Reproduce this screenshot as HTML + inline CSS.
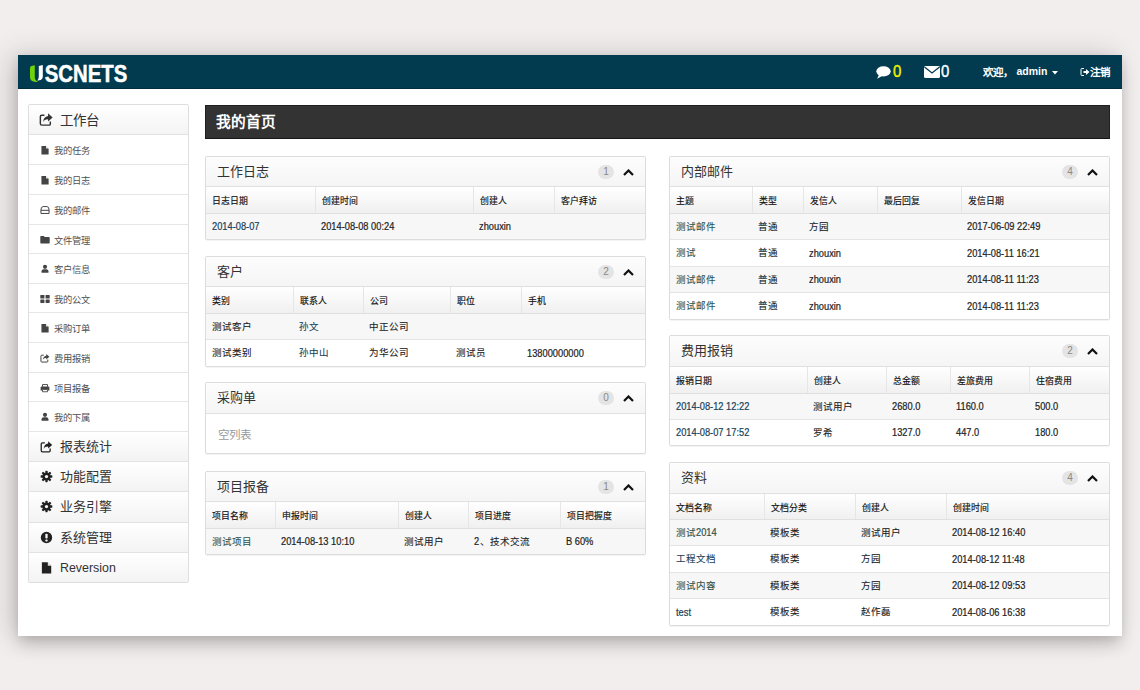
<!DOCTYPE html><html lang="zh-CN"><head><meta charset="utf-8"><style>

*{margin:0;padding:0;box-sizing:border-box}
html,body{width:1140px;height:690px;overflow:hidden}
body{background:#f2eeee;font-family:"Liberation Sans",sans-serif;color:#333;position:relative}
#frame{position:absolute;left:18px;top:55px;width:1104px;height:581px;background:#fff;box-shadow:0 10px 14px -2px rgba(60,50,50,0.22),-8px 0 26px rgba(60,50,50,0.2),0 0 9px rgba(60,50,50,0.07)}
#nav{position:absolute;left:18px;top:55px;width:1104px;height:34px;background:#023b50;border-bottom:1px solid #012d3e}
#logo{position:absolute;left:29px;top:60px;font-weight:bold;font-size:23px;color:#fff;letter-spacing:-0.3px}
#side{position:absolute;left:28px;width:161px;overflow:hidden;border:1px solid #dedede;border-radius:2px;background:#fff}
#side .sh{border-bottom:1px solid #e2e2e2;background:linear-gradient(#fff,#f4f4f4);position:absolute;left:0;right:0}
#side .sh svg{position:absolute;left:10px;top:7px}
#side .sh span{position:absolute;left:31px;top:3.5px;font-size:13.5px;color:#333}
#side .si{border-bottom:1px solid #e6e6e6;position:absolute;left:0;right:0}
#side .si i{position:absolute;left:11px;top:9.5px;line-height:0}
#side .si span{position:absolute;left:25px;top:7.5px;font-size:9.3px;color:#505050}
#side .sb{border-bottom:1px solid #e2e2e2;position:absolute;left:0;right:0;background:linear-gradient(#fff,#f3f3f3)}
#side .sb:last-child{border-bottom:none}
#side .sb i{position:absolute;left:11px;top:7.5px;line-height:0}
#side .sb span{position:absolute;left:31px;top:3.5px;font-size:13px;color:#333}
#side .sb span.en{top:8px;font-size:12.4px}
#title{position:absolute;left:205px;top:105px;width:905px;height:34px;background:#333;border:1px solid #1f1f1f;border-bottom-color:#151515}
#title span{position:absolute;left:10px;top:3.7px;font-size:14.7px;color:#fff;font-weight:bold}
.panel{position:absolute;border:1px solid #dcdcdc;border-radius:2px;background:#fff;overflow:hidden;box-shadow:0 1px 1px rgba(0,0,0,0.05)}
.ph{position:absolute;left:0;right:0;border-bottom:1px solid #e0e0e0;background:linear-gradient(#fdfdfd,#f5f5f5)}
.pt{position:absolute;left:11px;top:3.5px;font-size:13px;color:#333}
.badge{position:absolute;right:31px;top:7.5px;width:16px;height:14px;border-radius:7px;background:#e4e4e4;color:#888;font-size:10px;line-height:14px;text-align:center}
.chev{position:absolute;right:11.5px;top:11.5px;line-height:0}
.th{position:absolute;left:0;right:0;border-bottom:1px solid #e0e0e0;background:linear-gradient(#fff,#f0f0f0)}
.th .c{position:absolute;top:0;height:100%;padding-left:6px;font-size:8.9px;font-weight:500;color:#111;-webkit-text-stroke:0.15px currentColor;display:flex;align-items:center;white-space:nowrap;padding-top:1px}
.tr{position:absolute;left:0;right:0;border-bottom:1px solid #e4e4e4}
.tr:last-child{border-bottom:none}
.tr .c{position:absolute;top:0;height:100%;padding-left:6px;font-size:9.5px;color:#222;-webkit-text-stroke:0.1px currentColor;display:flex;align-items:center;white-space:nowrap;padding-bottom:2px}
.empty{position:absolute;left:0;right:0;}
.tr .en{display:inline-block;font-size:10.1px;transform:scaleX(0.92);transform-origin:0 50%;white-space:pre;-webkit-text-stroke:0.2px currentColor;position:relative;top:1.2px}
.empty{font-size:11.5px;color:#9a9a9a;padding:12px 0 0 12px}
#navr{position:absolute;top:55px;height:33px;left:0;width:1140px}

</style></head><body>
<div id="frame"></div><div id="nav"></div>
<svg width="110" height="24" viewBox="0 0 110 24" style="position:absolute;left:25px;top:60px">
<path d="M5 8.2 Q5 6.6 6.4 6.1 L9.8 5.2 L9.8 17.5 Q9.8 20.2 13.2 21.8 Q8.2 22.4 6 20.2 Q5 19 5 17 Z" fill="#6fd20a"/>
<path d="M13.8 5.9 L17.8 5 L17.8 16.4 Q17.8 19.6 14.2 20.3 Q12.8 20.5 12.3 20.2 Q13.8 19 13.8 16.5 Z" fill="#fff"/>
<text x="19.8" y="21.9" textLength="82.5" lengthAdjust="spacingAndGlyphs" font-family="Liberation Sans" font-weight="bold" font-size="23.2" fill="#fff" stroke="#fff" stroke-width="0.5">SCNETS</text>
</svg>
<svg width="15" height="13" viewBox="0 0 15 13" style="position:absolute;left:876px;top:66px"><ellipse cx="7.5" cy="5.3" rx="7.2" ry="5.1" fill="#fff"/><path d="M3 8.5 L1.2 12.8 L7 9.5 Z" fill="#fff"/></svg><span style="position:absolute;left:892.5px;top:62px;font-size:17px;color:#f0f000;transform:scaleX(0.88);-webkit-text-stroke:0.4px currentColor;transform-origin:0 0">0</span><svg width="16" height="12" viewBox="0 0 16 12" style="position:absolute;left:924px;top:66px"><rect x="0" y="0" width="16" height="12" rx="1.5" fill="#fff"/><path d="M0.5 1 L8 7 L15.5 1" fill="none" stroke="#04374f" stroke-width="1.3"/></svg><span style="position:absolute;left:941px;top:62px;font-size:17px;color:#fff;transform:scaleX(0.88);-webkit-text-stroke:0.4px currentColor;transform-origin:0 0">0</span><span style="position:absolute;left:983px;top:64px;font-size:10.5px;color:#fff;font-weight:bold;white-space:nowrap">欢迎，</span><span style="position:absolute;left:1016.5px;top:64.5px;font-size:10.5px;color:#fff;font-weight:bold">admin</span><svg width="6" height="4" viewBox="0 0 6 4" style="position:absolute;left:1051.5px;top:71px"><path d="M0 0 H6 L3 3.5 Z" fill="#fff"/></svg><svg width="10" height="10" viewBox="0 0 10 10" style="position:absolute;left:1080px;top:67px"><path d="M4 1.5 H2 Q1 1.5 1 2.5 V7.5 Q1 8.5 2 8.5 H4" fill="none" stroke="#fff" stroke-width="1"/><path d="M3.5 4 H6 V2 L9.5 5 L6 8 V6 H3.5 Z" fill="#fff"/></svg><span style="position:absolute;left:1090px;top:64px;font-size:10.5px;color:#fff;font-weight:bold">注销</span>
<div id="side" style="top:104px;height:479px">
<div class="sh" style="top:0;height:30px"><svg width="14.5" height="14.5" viewBox="0 0 16 16"><path d="M10 1.5 L15 6 L10 10.5 V8 C7 8 5.5 9 4.5 11 C4.8 7.5 6.5 4.8 10 4.3 Z" fill="#333"/><path d="M12.5 10.5 V13.2 Q12.5 14.5 11.2 14.5 H3 Q1.5 14.5 1.5 13 V5 Q1.5 3.5 3 3.5 H6" fill="none" stroke="#333" stroke-width="1.6"/></svg><span>工作台</span></div>
<div class="si" style="top:30px;height:30px"><i><svg width="10" height="10" viewBox="0 0 16 16"><path d="M2.3 1.5 H9.5 L13.8 5.8 V15.3 H2.3 Z" fill="#444"/><path d="M9.6 1.3 V5.7 H14 Z" fill="#fff" opacity="0.85"/></svg></i><span>我的任务</span></div>
<div class="si" style="top:60px;height:30px"><i><svg width="10" height="10" viewBox="0 0 16 16"><path d="M2.3 1.5 H9.5 L13.8 5.8 V15.3 H2.3 Z" fill="#444"/><path d="M9.6 1.3 V5.7 H14 Z" fill="#fff" opacity="0.85"/></svg></i><span>我的日志</span></div>
<div class="si" style="top:90px;height:30px"><i><svg width="10" height="10" viewBox="0 0 16 16"><path d="M1.5 8 Q1.5 2.5 5 2.5 H11 Q14.5 2.5 14.5 8 V13.5 H1.5 Z M1.5 8.5 H14.5" fill="none" stroke="#444" stroke-width="1.6"/></svg></i><span>我的邮件</span></div>
<div class="si" style="top:120px;height:29px"><i><svg width="10" height="10" viewBox="0 0 16 16"><path d="M0.5 2.5 Q0.5 1.5 1.5 1.5 H6 L7.5 3 H14.5 Q15.5 3 15.5 4 V12.5 Q15.5 13.5 14.5 13.5 H1.5 Q0.5 13.5 0.5 12.5 Z" fill="#444"/></svg></i><span>文件管理</span></div>
<div class="si" style="top:149px;height:30px"><i><svg width="10" height="10" viewBox="0 0 16 16"><circle cx="8" cy="4.5" r="3.3" fill="#444"/><path d="M2.5 14 V11.5 Q2.5 8.5 6 8.5 H10 Q13.5 8.5 13.5 11.5 V14 Z" fill="#444"/></svg></i><span>客户信息</span></div>
<div class="si" style="top:179px;height:29px"><i><svg width="10" height="10" viewBox="0 0 16 16"><rect x="0.5" y="1.5" width="6.6" height="5.6" rx="0.9" fill="#444"/><rect x="8.9" y="1.5" width="6.6" height="5.6" rx="0.9" fill="#444"/><rect x="0.5" y="8.6" width="6.6" height="5.6" rx="0.9" fill="#444"/><rect x="8.9" y="8.6" width="6.6" height="5.6" rx="0.9" fill="#444"/></svg></i><span>我的公文</span></div>
<div class="si" style="top:208px;height:30px"><i><svg width="10" height="10" viewBox="0 0 16 16"><path d="M2.3 1.5 H9.5 L13.8 5.8 V15.3 H2.3 Z" fill="#444"/><path d="M9.6 1.3 V5.7 H14 Z" fill="#fff" opacity="0.85"/></svg></i><span>采购订单</span></div>
<div class="si" style="top:238px;height:30px"><i><svg width="10" height="10" viewBox="0 0 16 16"><path d="M10 1.5 L15 6 L10 10.5 V8 C7 8 5.5 9 4.5 11 C4.8 7.5 6.5 4.8 10 4.3 Z" fill="#444"/><path d="M12.5 10.5 V13.2 Q12.5 14.5 11.2 14.5 H3 Q1.5 14.5 1.5 13 V5 Q1.5 3.5 3 3.5 H6" fill="none" stroke="#444" stroke-width="1.6"/></svg></i><span>费用报销</span></div>
<div class="si" style="top:268px;height:29px"><i><svg width="10" height="10" viewBox="0 0 16 16"><path d="M4 6 V2.5 H12 V6" fill="none" stroke="#444" stroke-width="1.5"/><path d="M1 7 Q1 5.5 2.5 5.5 H13.5 Q15 5.5 15 7 V12 H12.5 V10 H3.5 V12 H1 Z" fill="#444"/><path d="M4 10.5 H12 V14 H4 Z" fill="none" stroke="#444" stroke-width="1.4"/></svg></i><span>项目报备</span></div>
<div class="si" style="top:297px;height:30px"><i><svg width="10" height="10" viewBox="0 0 16 16"><circle cx="8" cy="4.5" r="3.3" fill="#444"/><path d="M2.5 14 V11.5 Q2.5 8.5 6 8.5 H10 Q13.5 8.5 13.5 11.5 V14 Z" fill="#444"/></svg></i><span>我的下属</span></div>
<div class="sb" style="top:327px;height:30px"><i><svg width="13" height="13" viewBox="0 0 16 16"><path d="M10 1.5 L15 6 L10 10.5 V8 C7 8 5.5 9 4.5 11 C4.8 7.5 6.5 4.8 10 4.3 Z" fill="#222"/><path d="M12.5 10.5 V13.2 Q12.5 14.5 11.2 14.5 H3 Q1.5 14.5 1.5 13 V5 Q1.5 3.5 3 3.5 H6" fill="none" stroke="#222" stroke-width="1.6"/></svg></i><span>报表统计</span></div>
<div class="sb" style="top:357px;height:30px"><i><svg width="13" height="13" viewBox="0 0 16 16"><g fill="#222"><circle cx="8" cy="8" r="5"/><rect x="6.6" y="0.8" width="2.8" height="14.4" rx="0.6"/><rect x="6.6" y="0.8" width="2.8" height="14.4" rx="0.6" transform="rotate(45 8 8)"/><rect x="6.6" y="0.8" width="2.8" height="14.4" rx="0.6" transform="rotate(90 8 8)"/><rect x="6.6" y="0.8" width="2.8" height="14.4" rx="0.6" transform="rotate(135 8 8)"/></g><circle cx="8" cy="8" r="2" fill="#f8f8f8"/></svg></i><span>功能配置</span></div>
<div class="sb" style="top:387px;height:31px"><i><svg width="13" height="13" viewBox="0 0 16 16"><g fill="#222"><circle cx="8" cy="8" r="5"/><rect x="6.6" y="0.8" width="2.8" height="14.4" rx="0.6"/><rect x="6.6" y="0.8" width="2.8" height="14.4" rx="0.6" transform="rotate(45 8 8)"/><rect x="6.6" y="0.8" width="2.8" height="14.4" rx="0.6" transform="rotate(90 8 8)"/><rect x="6.6" y="0.8" width="2.8" height="14.4" rx="0.6" transform="rotate(135 8 8)"/></g><circle cx="8" cy="8" r="2" fill="#f8f8f8"/></svg></i><span>业务引擎</span></div>
<div class="sb" style="top:418px;height:30px"><i><svg width="13" height="13" viewBox="0 0 16 16"><circle cx="8" cy="8" r="7" fill="#222"/><rect x="6.6" y="3.3" width="2.8" height="6" rx="1" fill="#fafafa"/><rect x="6.6" y="10.4" width="2.8" height="2.4" rx="0.6" fill="#fafafa"/></svg></i><span>系统管理</span></div>
<div class="sb" style="top:448px;height:29px"><i><svg width="13" height="13" viewBox="0 0 16 16"><path d="M2.3 1.5 H9.5 L13.8 5.8 V15.3 H2.3 Z" fill="#222"/><path d="M9.6 1.3 V5.7 H14 Z" fill="#fff" opacity="0.85"/></svg></i><span class="en">Reversion</span></div>
</div>
<div id="title"><span>我的首页</span></div>
<div class="panel" style="left:205px;top:156px;width:441px;height:84px">
<div class="ph" style="top:0;height:30px"><span class="pt">工作日志</span><span class="badge">1</span><span class="chev"><svg width="11" height="7" viewBox="0 0 11 7"><path d="M1 6 L5.5 1.5 L10 6" fill="none" stroke="#111" stroke-width="2.2"/></svg></span></div>
<div class="th" style="top:30px;height:27px">
<div class="c" style="left:0px;width:110px;">日志日期</div>
<div class="c" style="left:109px;width:158px;border-left:1px solid #e6e6e6;">创建时间</div>
<div class="c" style="left:267px;width:81px;border-left:1px solid #e6e6e6;">创建人</div>
<div class="c" style="left:348px;width:91px;border-left:1px solid #e6e6e6;">客户拜访</div>
</div>
<div class="tr" style="top:57px;height:25px;background:#f7f7f7">
<div class="c" style="left:0px;width:110px;color:#173f58"><span class="en">2014-08-07</span></div>
<div class="c" style="left:109px;width:158px"><span class="en">2014-08-08 00:24</span></div>
<div class="c" style="left:267px;width:81px"><span class="en">zhouxin</span></div>
<div class="c" style="left:348px;width:91px"></div>
</div>
</div>
<div class="panel" style="left:205px;top:256px;width:441px;height:111px">
<div class="ph" style="top:0;height:30px"><span class="pt">客户</span><span class="badge">2</span><span class="chev"><svg width="11" height="7" viewBox="0 0 11 7"><path d="M1 6 L5.5 1.5 L10 6" fill="none" stroke="#111" stroke-width="2.2"/></svg></span></div>
<div class="th" style="top:30px;height:27px">
<div class="c" style="left:0px;width:88px;">类别</div>
<div class="c" style="left:87px;width:70px;border-left:1px solid #e6e6e6;">联系人</div>
<div class="c" style="left:157px;width:87px;border-left:1px solid #e6e6e6;">公司</div>
<div class="c" style="left:244px;width:71px;border-left:1px solid #e6e6e6;">职位</div>
<div class="c" style="left:315px;width:124px;border-left:1px solid #e6e6e6;">手机</div>
</div>
<div class="tr" style="top:57px;height:26px;background:#f7f7f7">
<div class="c" style="left:0px;width:88px">测试客户</div>
<div class="c" style="left:87px;width:70px;color:#173f58">孙文</div>
<div class="c" style="left:157px;width:87px">中正公司</div>
<div class="c" style="left:244px;width:71px"></div>
<div class="c" style="left:315px;width:124px"></div>
</div>
<div class="tr" style="top:83px;height:26px;background:#ffffff">
<div class="c" style="left:0px;width:88px">测试类别</div>
<div class="c" style="left:87px;width:70px;color:#173f58">孙中山</div>
<div class="c" style="left:157px;width:87px">为华公司</div>
<div class="c" style="left:244px;width:71px">测试员</div>
<div class="c" style="left:315px;width:124px"><span class="en">13800000000</span></div>
</div>
</div>
<div class="panel" style="left:205px;top:382px;width:441px;height:72px">
<div class="ph" style="top:0;height:31px"><span class="pt">采购单</span><span class="badge">0</span><span class="chev"><svg width="11" height="7" viewBox="0 0 11 7"><path d="M1 6 L5.5 1.5 L10 6" fill="none" stroke="#111" stroke-width="2.2"/></svg></span></div>
<div class="empty" style="top:31px;height:39px">空列表</div>
</div>
<div class="panel" style="left:205px;top:471px;width:441px;height:84px">
<div class="ph" style="top:0;height:30px"><span class="pt">项目报备</span><span class="badge">1</span><span class="chev"><svg width="11" height="7" viewBox="0 0 11 7"><path d="M1 6 L5.5 1.5 L10 6" fill="none" stroke="#111" stroke-width="2.2"/></svg></span></div>
<div class="th" style="top:30px;height:27px">
<div class="c" style="left:0px;width:70px;">项目名称</div>
<div class="c" style="left:69px;width:123px;border-left:1px solid #e6e6e6;">申报时间</div>
<div class="c" style="left:192px;width:70px;border-left:1px solid #e6e6e6;">创建人</div>
<div class="c" style="left:262px;width:92px;border-left:1px solid #e6e6e6;">项目进度</div>
<div class="c" style="left:354px;width:85px;border-left:1px solid #e6e6e6;">项目把握度</div>
</div>
<div class="tr" style="top:57px;height:25px;background:#f7f7f7">
<div class="c" style="left:0px;width:70px;color:#2f524c">测试项目</div>
<div class="c" style="left:69px;width:123px"><span class="en">2014-08-13 10:10</span></div>
<div class="c" style="left:192px;width:70px">测试用户</div>
<div class="c" style="left:262px;width:92px"><span class="en">2</span>、技术交流</div>
<div class="c" style="left:354px;width:85px"><span class="en">B 60%</span></div>
</div>
</div>
<div class="panel" style="left:669px;top:156px;width:441px;height:164px">
<div class="ph" style="top:0;height:30px"><span class="pt">内部邮件</span><span class="badge">4</span><span class="chev"><svg width="11" height="7" viewBox="0 0 11 7"><path d="M1 6 L5.5 1.5 L10 6" fill="none" stroke="#111" stroke-width="2.2"/></svg></span></div>
<div class="th" style="top:30px;height:27px">
<div class="c" style="left:0px;width:83px;">主题</div>
<div class="c" style="left:82px;width:51px;border-left:1px solid #e6e6e6;">类型</div>
<div class="c" style="left:133px;width:74px;border-left:1px solid #e6e6e6;">发信人</div>
<div class="c" style="left:207px;width:84px;border-left:1px solid #e6e6e6;">最后回复</div>
<div class="c" style="left:291px;width:148px;border-left:1px solid #e6e6e6;">发信日期</div>
</div>
<div class="tr" style="top:57px;height:26px;background:#f7f7f7">
<div class="c" style="left:0px;width:83px;color:#2f524c">测试邮件</div>
<div class="c" style="left:82px;width:51px">普通</div>
<div class="c" style="left:133px;width:74px">方园</div>
<div class="c" style="left:207px;width:84px"></div>
<div class="c" style="left:291px;width:148px"><span class="en">2017-06-09 22:49</span></div>
</div>
<div class="tr" style="top:83px;height:27px;background:#ffffff">
<div class="c" style="left:0px;width:83px;color:#2f524c">测试</div>
<div class="c" style="left:82px;width:51px">普通</div>
<div class="c" style="left:133px;width:74px"><span class="en">zhouxin</span></div>
<div class="c" style="left:207px;width:84px"></div>
<div class="c" style="left:291px;width:148px"><span class="en">2014-08-11 16:21</span></div>
</div>
<div class="tr" style="top:110px;height:26px;background:#f7f7f7">
<div class="c" style="left:0px;width:83px;color:#2f524c">测试邮件</div>
<div class="c" style="left:82px;width:51px">普通</div>
<div class="c" style="left:133px;width:74px"><span class="en">zhouxin</span></div>
<div class="c" style="left:207px;width:84px"></div>
<div class="c" style="left:291px;width:148px"><span class="en">2014-08-11 11:23</span></div>
</div>
<div class="tr" style="top:136px;height:26px;background:#ffffff">
<div class="c" style="left:0px;width:83px;color:#2f524c">测试邮件</div>
<div class="c" style="left:82px;width:51px">普通</div>
<div class="c" style="left:133px;width:74px"><span class="en">zhouxin</span></div>
<div class="c" style="left:207px;width:84px"></div>
<div class="c" style="left:291px;width:148px"><span class="en">2014-08-11 11:23</span></div>
</div>
</div>
<div class="panel" style="left:669px;top:335px;width:441px;height:111px">
<div class="ph" style="top:0;height:31px"><span class="pt">费用报销</span><span class="badge">2</span><span class="chev"><svg width="11" height="7" viewBox="0 0 11 7"><path d="M1 6 L5.5 1.5 L10 6" fill="none" stroke="#111" stroke-width="2.2"/></svg></span></div>
<div class="th" style="top:31px;height:27px">
<div class="c" style="left:0px;width:138px;">报销日期</div>
<div class="c" style="left:137px;width:79px;border-left:1px solid #e6e6e6;">创建人</div>
<div class="c" style="left:216px;width:64px;border-left:1px solid #e6e6e6;">总金额</div>
<div class="c" style="left:280px;width:79px;border-left:1px solid #e6e6e6;">差旅费用</div>
<div class="c" style="left:359px;width:80px;border-left:1px solid #e6e6e6;">住宿费用</div>
</div>
<div class="tr" style="top:58px;height:26px;background:#f7f7f7">
<div class="c" style="left:0px;width:138px;color:#173f58"><span class="en">2014-08-12 12:22</span></div>
<div class="c" style="left:137px;width:79px">测试用户</div>
<div class="c" style="left:216px;width:64px"><span class="en">2680.0</span></div>
<div class="c" style="left:280px;width:79px"><span class="en">1160.0</span></div>
<div class="c" style="left:359px;width:80px"><span class="en">500.0</span></div>
</div>
<div class="tr" style="top:84px;height:25px;background:#ffffff">
<div class="c" style="left:0px;width:138px;color:#173f58"><span class="en">2014-08-07 17:52</span></div>
<div class="c" style="left:137px;width:79px">罗希</div>
<div class="c" style="left:216px;width:64px"><span class="en">1327.0</span></div>
<div class="c" style="left:280px;width:79px"><span class="en">447.0</span></div>
<div class="c" style="left:359px;width:80px"><span class="en">180.0</span></div>
</div>
</div>
<div class="panel" style="left:669px;top:462px;width:441px;height:164px">
<div class="ph" style="top:0;height:31px"><span class="pt">资料</span><span class="badge">4</span><span class="chev"><svg width="11" height="7" viewBox="0 0 11 7"><path d="M1 6 L5.5 1.5 L10 6" fill="none" stroke="#111" stroke-width="2.2"/></svg></span></div>
<div class="th" style="top:31px;height:26px">
<div class="c" style="left:0px;width:95px;">文档名称</div>
<div class="c" style="left:94px;width:91px;border-left:1px solid #e6e6e6;">文档分类</div>
<div class="c" style="left:185px;width:91px;border-left:1px solid #e6e6e6;">创建人</div>
<div class="c" style="left:276px;width:163px;border-left:1px solid #e6e6e6;">创建时间</div>
</div>
<div class="tr" style="top:57px;height:26px;background:#f7f7f7">
<div class="c" style="left:0px;width:95px;color:#2f524c">测试<span class="en">2014</span></div>
<div class="c" style="left:94px;width:91px">模板类</div>
<div class="c" style="left:185px;width:91px">测试用户</div>
<div class="c" style="left:276px;width:163px"><span class="en">2014-08-12 16:40</span></div>
</div>
<div class="tr" style="top:83px;height:27px;background:#ffffff">
<div class="c" style="left:0px;width:95px;color:#173f58">工程文档</div>
<div class="c" style="left:94px;width:91px">模板类</div>
<div class="c" style="left:185px;width:91px">方园</div>
<div class="c" style="left:276px;width:163px"><span class="en">2014-08-12 11:48</span></div>
</div>
<div class="tr" style="top:110px;height:26px;background:#f7f7f7">
<div class="c" style="left:0px;width:95px;color:#2f524c">测试内容</div>
<div class="c" style="left:94px;width:91px">模板类</div>
<div class="c" style="left:185px;width:91px">方园</div>
<div class="c" style="left:276px;width:163px"><span class="en">2014-08-12 09:53</span></div>
</div>
<div class="tr" style="top:136px;height:26px;background:#ffffff">
<div class="c" style="left:0px;width:95px;color:#173f58"><span class="en">test</span></div>
<div class="c" style="left:94px;width:91px">模板类</div>
<div class="c" style="left:185px;width:91px">赵作磊</div>
<div class="c" style="left:276px;width:163px"><span class="en">2014-08-06 16:38</span></div>
</div>
</div>
</body></html>
